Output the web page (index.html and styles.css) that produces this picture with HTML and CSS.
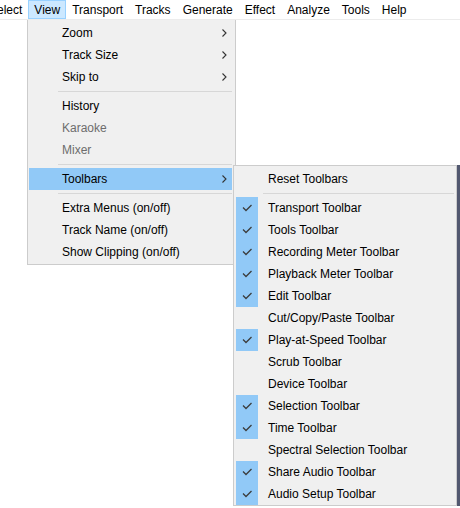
FILE: index.html
```html
<!DOCTYPE html>
<html>
<head>
<meta charset="utf-8">
<link rel="stylesheet" href="styles.css">
</head>
<body>
<div class="menubar">
  <span class="mb-item">Select</span>
  <span class="mb-item active">View</span>
  <span class="mb-item">Transport</span>
  <span class="mb-item">Tracks</span>
  <span class="mb-item">Generate</span>
  <span class="mb-item">Effect</span>
  <span class="mb-item">Analyze</span>
  <span class="mb-item">Tools</span>
  <span class="mb-item">Help</span>
</div>

<div class="menu main-menu">
  <div class="item"><span class="label">Zoom</span><svg class="chev" width="5" height="8" viewBox="0 0 5 8"><polyline points="0.5,0.5 4,4 0.5,7.5"/></svg></div>
  <div class="item"><span class="label">Track Size</span><svg class="chev" width="5" height="8" viewBox="0 0 5 8"><polyline points="0.5,0.5 4,4 0.5,7.5"/></svg></div>
  <div class="item"><span class="label">Skip to</span><svg class="chev" width="5" height="8" viewBox="0 0 5 8"><polyline points="0.5,0.5 4,4 0.5,7.5"/></svg></div>
  <div class="sep"></div>
  <div class="item"><span class="label">History</span></div>
  <div class="item disabled"><span class="label">Karaoke</span></div>
  <div class="item disabled"><span class="label">Mixer</span></div>
  <div class="sep"></div>
  <div class="item hot"><span class="label">Toolbars</span><svg class="chev" width="5" height="8" viewBox="0 0 5 8"><polyline points="0.5,0.5 4,4 0.5,7.5"/></svg></div>
  <div class="sep"></div>
  <div class="item"><span class="label">Extra Menus (on/off)</span></div>
  <div class="item"><span class="label">Track Name (on/off)</span></div>
  <div class="item"><span class="label">Show Clipping (on/off)</span></div>
</div>

<div class="menu sub-menu">
  <div class="sitem"><span class="check"></span><span class="label">Reset Toolbars</span></div>
  <div class="sep"></div>
  <div class="sitem"><span class="check on"><svg width="22" height="22" viewBox="0 0 22 22"><polyline points="7,10.5 10,13.5 15.5,8"/></svg></span><span class="label">Transport Toolbar</span></div>
  <div class="sitem"><span class="check on"><svg width="22" height="22" viewBox="0 0 22 22"><polyline points="7,10.5 10,13.5 15.5,8"/></svg></span><span class="label">Tools Toolbar</span></div>
  <div class="sitem"><span class="check on"><svg width="22" height="22" viewBox="0 0 22 22"><polyline points="7,10.5 10,13.5 15.5,8"/></svg></span><span class="label">Recording Meter Toolbar</span></div>
  <div class="sitem"><span class="check on"><svg width="22" height="22" viewBox="0 0 22 22"><polyline points="7,10.5 10,13.5 15.5,8"/></svg></span><span class="label">Playback Meter Toolbar</span></div>
  <div class="sitem"><span class="check on"><svg width="22" height="22" viewBox="0 0 22 22"><polyline points="7,10.5 10,13.5 15.5,8"/></svg></span><span class="label">Edit Toolbar</span></div>
  <div class="sitem"><span class="check"></span><span class="label">Cut/Copy/Paste Toolbar</span></div>
  <div class="sitem"><span class="check on"><svg width="22" height="22" viewBox="0 0 22 22"><polyline points="7,10.5 10,13.5 15.5,8"/></svg></span><span class="label">Play-at-Speed Toolbar</span></div>
  <div class="sitem"><span class="check"></span><span class="label">Scrub Toolbar</span></div>
  <div class="sitem"><span class="check"></span><span class="label">Device Toolbar</span></div>
  <div class="sitem"><span class="check on"><svg width="22" height="22" viewBox="0 0 22 22"><polyline points="7,10.5 10,13.5 15.5,8"/></svg></span><span class="label">Selection Toolbar</span></div>
  <div class="sitem"><span class="check on"><svg width="22" height="22" viewBox="0 0 22 22"><polyline points="7,10.5 10,13.5 15.5,8"/></svg></span><span class="label">Time Toolbar</span></div>
  <div class="sitem"><span class="check"></span><span class="label">Spectral Selection Toolbar</span></div>
  <div class="sitem"><span class="check on"><svg width="22" height="22" viewBox="0 0 22 22"><polyline points="7,10.5 10,13.5 15.5,8"/></svg></span><span class="label">Share Audio Toolbar</span></div>
  <div class="sitem"><span class="check on"><svg width="22" height="22" viewBox="0 0 22 22"><polyline points="7,10.5 10,13.5 15.5,8"/></svg></span><span class="label">Audio Setup Toolbar</span></div>
</div>
</body>
</html>
```

FILE: styles.css
```css
html, body {
  margin: 0;
  padding: 0;
  background: #ffffff;
  width: 460px;
  height: 508px;
  overflow: hidden;
  font-family: "Liberation Sans", Arial, sans-serif;
  font-size: 12px;
  color: #000000;
}

.menubar {
  display: flex;
  height: 19px;
  border-bottom: 1px solid #ececec;
  margin-left: -17px;
  white-space: nowrap;
}

.mb-item {
  display: flex;
  align-items: center;
  padding: 0 6px;
  height: 19px;
}

.mb-item.active {
  background: #cce8ff;
  box-shadow: inset 0 0 0 1px #99d1ff;
}

.menu {
  position: absolute;
  background: #f0f0f0;
  border: 1px solid #cccccc;
  box-sizing: border-box;
  white-space: nowrap;
}

.main-menu {
  left: 27px;
  top: 20px;
  width: 209px;
  padding: 2px 3px 1px 1px;
  border-top: none;
}

.item {
  display: flex;
  align-items: center;
  height: 22px;
  padding-left: 33px;
  padding-right: 5px;
}

.item .label {
  flex: 1;
}

.item.disabled {
  color: #6d6d6d;
}

.item.hot {
  background: #91c9f7;
}

.chev {
  display: block;
}

.chev polyline {
  fill: none;
  stroke: #333333;
  stroke-width: 1.1;
}

.sep {
  height: 1px;
  background: #d7d7d7;
  margin: 3px 0 3px 29px;
}

.sub-menu {
  left: 233px;
  top: 165px;
  width: 224px;
  height: 341px;
  padding: 2px 2px 0 2px;
  box-shadow: 3px 0 0 #525870;
}

.sub-menu .sep {
  margin-left: 27px;
}

.sitem {
  display: flex;
  align-items: center;
  height: 22px;
}

.check {
  width: 22px;
  height: 22px;
  flex: none;
  margin-right: 10px;
}

.check.on {
  background: #91c9f7;
}

.check svg {
  display: block;
}

.check polyline {
  fill: none;
  stroke: #3c3c3c;
  stroke-width: 1.3;
}
```
